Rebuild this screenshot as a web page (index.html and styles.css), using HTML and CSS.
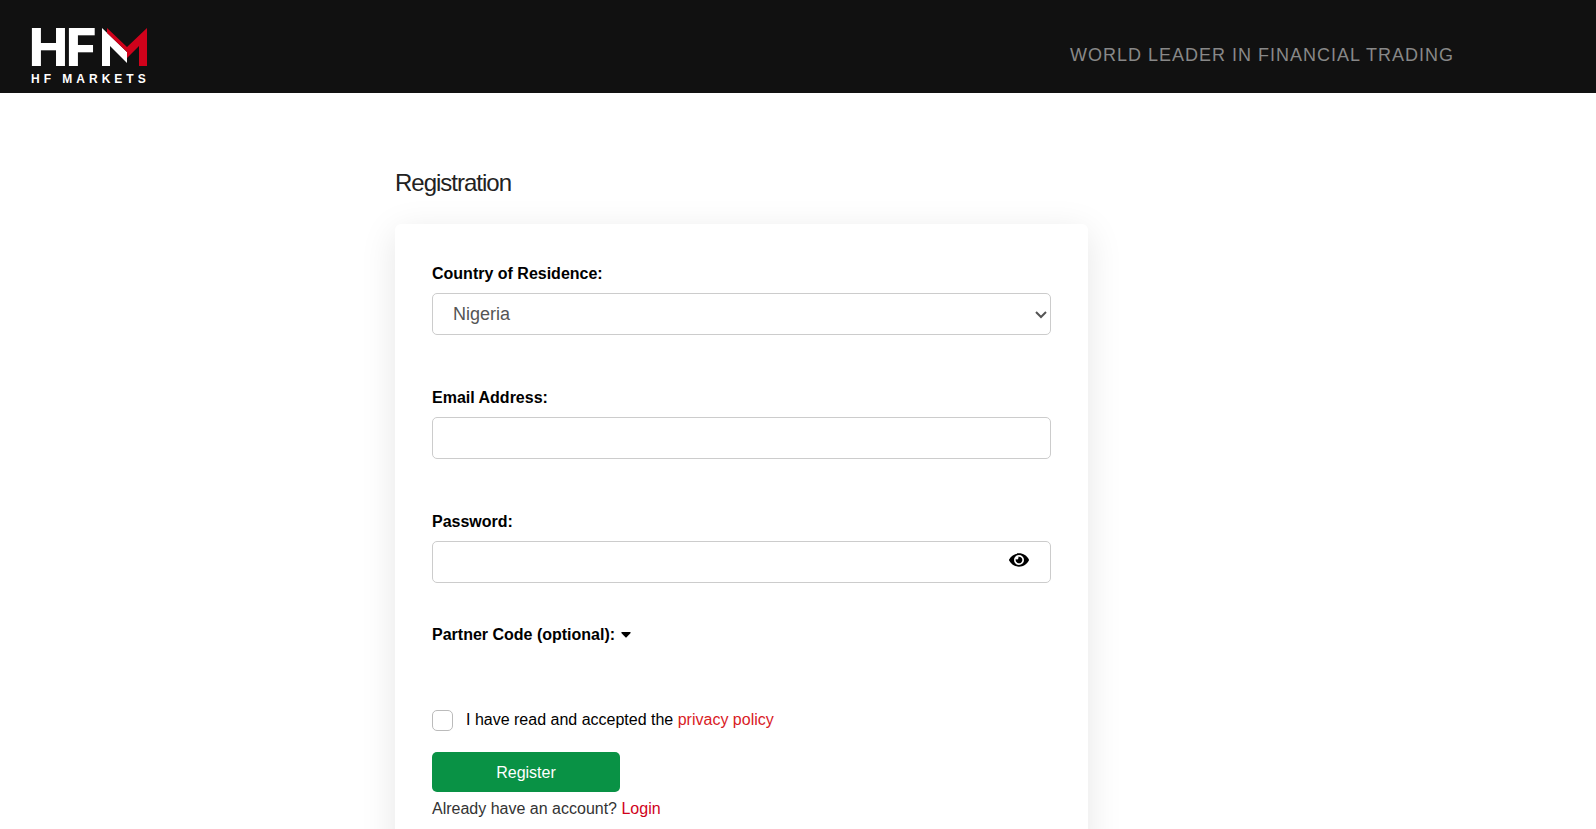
FILE: index.html
```html
<!DOCTYPE html>
<html lang="en">
<head>
    <meta charset="UTF-8">
    <meta name="viewport" content="width=device-width, initial-scale=1.0">
    <title>Registration - HF Markets</title>
    <link rel="stylesheet" href="styles.css">
</head>
<body>
    <header class="header">
        <a class="logo" href="#" aria-label="HF Markets">
            <svg width="126" height="78" viewBox="-4 -18 126 78">
                <text class="logo-letters" x="-2 35" y="40">HF</text>
                <path fill="#fff" d="M71 2l25 24v11L79 20v20h-8z"/>
                <path fill="#d0021b" d="M76 2l20 19L116 2v38h-8V20L96 32v-6L76 7z"/>
                <text class="logo-name" x="0" y="57">HF MARKETS</text>
            </svg>
        </a>
        <span class="slogan">WORLD LEADER IN FINANCIAL TRADING</span>
    </header>

    <main class="main">
        <div class="container">
            <h1 class="title">Registration</h1>
            <form class="card">
                <div class="field">
                    <label for="country">Country of Residence:</label>
                    <div class="control-wrap">
                        <select class="control" id="country">
                            <option>Nigeria</option>
                        </select>
                        <svg class="arrow" width="12" height="8" viewBox="0 0 12 8">
                            <path d="M1 1l5 5 5-5" fill="none" stroke="#555" stroke-width="2"/>
                        </svg>
                    </div>
                </div>
                <div class="field">
                    <label for="email">Email Address:</label>
                    <input class="control" type="email" id="email">
                </div>
                <div class="field">
                    <label for="password">Password:</label>
                    <div class="control-wrap">
                        <input class="control" type="password" id="password">
                        <button class="eye" type="button" aria-label="Show password">
                            <svg width="20" height="18" viewBox="0 0 576 512">
                                <path d="M572.5 241.4C518.3 135.6 410.9 64 288 64S57.7 135.6 3.5 241.4a32.4 32.4 0 0 0 0 29.2C57.7 376.4 165.1 448 288 448s230.3-71.6 284.5-177.4a32.4 32.4 0 0 0 0-29.2zM288 400a144 144 0 1 1 144-144 143.9 143.9 0 0 1-144 144zm0-240a95.3 95.3 0 0 0-25.3 3.8 47.9 47.9 0 0 1-66.9 66.9A95.8 95.8 0 1 0 288 160z"/>
                            </svg>
                        </button>
                    </div>
                </div>
                <button class="partner" type="button">
                    Partner Code (optional):
                    <svg width="10" height="6" viewBox="0 0 10 6"><path d="M1 0h8q1 0 .6 1L5.600 5.200q-.6.600-1.200 0L.4 1Q0 0 1 0z"/></svg>
                </button>
                <div class="policy">
                    <input type="checkbox" id="policy">
                    <label for="policy">I have read and accepted the <a href="#">privacy policy</a></label>
                </div>
                <button class="register" type="submit">Register</button>
                <p class="login">Already have an account? <a href="#">Login</a></p>
            </form>
        </div>
    </main>
</body>
</html>
```
FILE: styles.css
```css
* {
    box-sizing: border-box;
}
body {
    margin: 0;
    font-family: "Liberation Sans", Arial, sans-serif;
    font-size: 16px;
    line-height: 24px;
    color: #333;
    background-color: #fff;
}
button, input, select {
    font-family: inherit;
    font-size: inherit;
}
.header {
    display: flex;
    align-items: flex-end;
    justify-content: space-between;
    padding: 8px 142px 7px 27px;
    background-color: #111;
}
.logo, .logo svg {
    display: block;
}
.logo-letters {
    font-family: Inter, sans-serif;
    font-size: 52px;
    font-weight: 800;
    fill: #fff;
}
.logo-name {
    font-size: 12px;
    font-weight: bold;
    letter-spacing: 4px;
    fill: #fff;
}
.slogan {
    padding-bottom: 19px;
    font-size: 18px;
    letter-spacing: 1px;
    color: #888;
}
.main {
    padding: 74px 113px 0 0;
}
.container {
    max-width: 693px;
    margin: 0 auto;
}
.title {
    margin: 0 0 25px;
    font-size: 24px;
    line-height: 32px;
    font-weight: normal;
    letter-spacing: -1px;
    color: #222;
}
.card {
    display: flex;
    flex-direction: column;
    align-items: flex-start;
    padding: 38px 37px;
    border-radius: 6px;
    background-color: #fff;
    box-shadow: 0 8px 36px rgba(0, 0, 0, 0.1);
}
.field {
    width: 100%;
    margin-bottom: 51px;
}
.field:nth-child(3) {
    margin-bottom: 40px;
}
.field label {
    display: block;
    margin-bottom: 7px;
    font-weight: bold;
    color: #000;
}
.control {
    display: block;
    width: 100%;
    height: 42px;
    padding: 0 20px;
    border: 1px solid #ccc;
    border-radius: 5px;
    font-size: 18px;
    color: #555;
    background-color: #fff;
    appearance: none;
}
.control-wrap {
    position: relative;
}
.arrow {
    position: absolute;
    top: 18px;
    right: 4px;
    pointer-events: none;
}
.eye {
    position: absolute;
    top: 0;
    right: 22px;
    height: 38px;
    padding: 0;
    border: 0;
    background: none;
}
.eye svg {
    display: block;
}
.partner {
    display: flex;
    align-items: center;
    gap: 6px;
    margin-bottom: 61px;
    padding: 0;
    border: 0;
    line-height: 24px;
    font-weight: bold;
    color: #000;
    background: none;
}
.policy {
    display: flex;
    align-items: center;
    gap: 13px;
    margin-bottom: 20px;
    color: #000;
}
.policy input {
    width: 21px;
    height: 21px;
    margin: 0;
    border: 1px solid #bbb;
    border-radius: 5px;
    background-color: #fff;
    appearance: none;
}
.policy input:checked {
    background-color: #099245;
}
a {
    color: #d0021b;
    text-decoration: none;
}
.policy a {
    color: #d9201f;
}
.register {
    width: 188px;
    height: 40px;
    padding: 2px 0 0;
    border: 0;
    border-radius: 5px;
    color: #fff;
    background-color: #099245;
}
.login {
    margin: 5px 0 0;
}
```
